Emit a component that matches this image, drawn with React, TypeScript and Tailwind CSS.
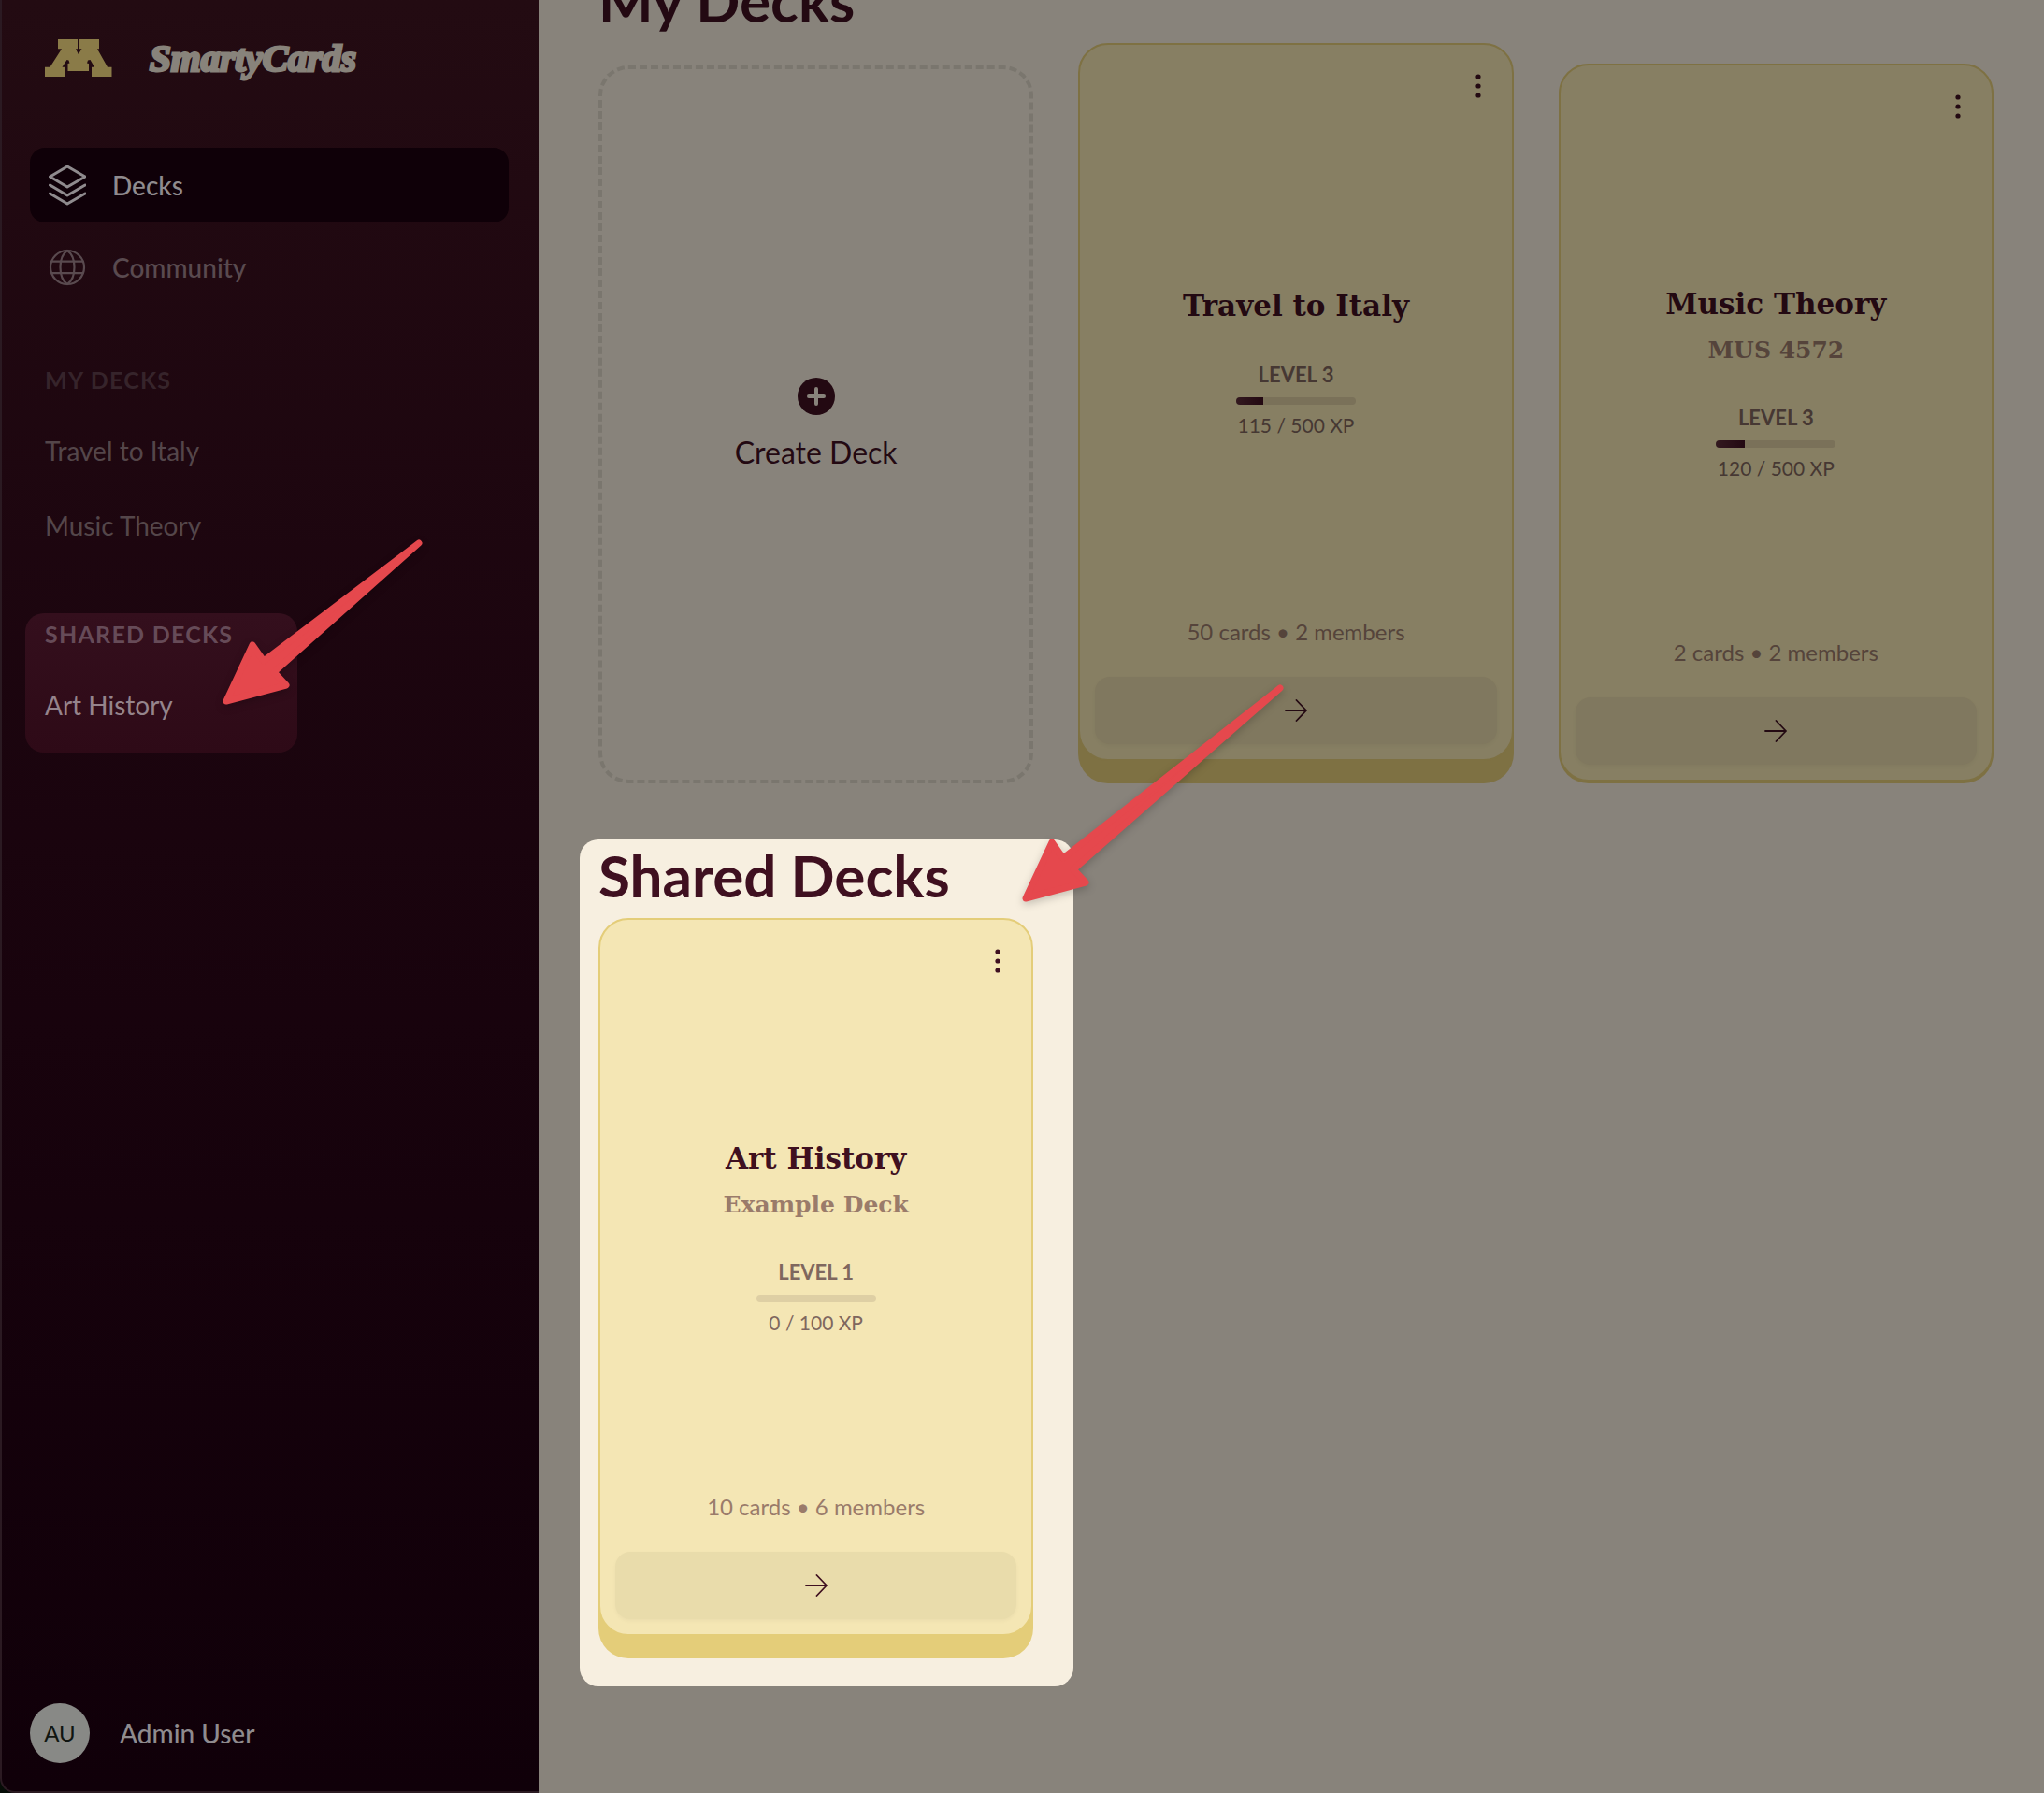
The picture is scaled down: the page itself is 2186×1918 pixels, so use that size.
import type { ReactNode } from "react";

type Tone = "dim" | "bright";

const tones = {
  dim: {
    body: "bg-[#877f63] border-[#7e7143]",
    edge: "#7e7143",
    strong: "text-[#230912]",
    level: "text-[#463833]",
    muted: "text-[#55443b]",
    track: "bg-[#7a7159]",
    action: "bg-[#80785f]",
  },
  bright: {
    body: "bg-[#f4e6b4] border-[#e4cd79]",
    edge: "#e4cd79",
    strong: "text-[#3f1020]",
    level: "text-[#7f675e]",
    muted: "text-[#9a7b6a]",
    track: "bg-[#decfa4]",
    action: "bg-[#e9dcab]",
  },
};

interface Deck {
  title: string;
  subtitle?: string;
  level: number;
  xp: number;
  goal: number;
  cards: number;
  members: number;
}

const italy: Deck = { title: "Travel to Italy", level: 3, xp: 115, goal: 500, cards: 50, members: 2 };
const music: Deck = { title: "Music Theory", subtitle: "MUS 4572", level: 3, xp: 120, goal: 500, cards: 2, members: 2 };
const art: Deck = { title: "Art History", subtitle: "Example Deck", level: 1, xp: 0, goal: 100, cards: 10, members: 6 };

function LogoMark() {
  return (
    <svg viewBox="0 0 72 40" className="h-10 w-[72px] shrink-0" fill="#8a7b48" aria-hidden="true">
      <path d="M14 0H35V10.3H33L35.8 16L39.500 10.3H37V0H58V10.3H56L67 29.7H71.500V40H50V29.7H53L48.500 22L46 22.500L45 25.500L47 26V34H24.500V26L26.500 25.500L25.500 22.500L23.500 22L18.500 29.7H21.500V40H0V29.7H5.500L18 10.3H14Z" />
    </svg>
  );
}

function LayersIcon() {
  return (
    <svg viewBox="0 0 40 44" className="h-11 w-10 shrink-0" fill="none" stroke="currentColor" strokeWidth="3" strokeLinejoin="round" strokeLinecap="round" aria-hidden="true">
      <path d="M20 2L39 13L20 24L1.500 13Z" />
      <path d="M1.500 22L20 33L39 22" />
      <path d="M1.500 31L20 42L39 31" />
    </svg>
  );
}

function GlobeIcon() {
  return (
    <svg viewBox="0 0 40 40" className="h-10 w-10 shrink-0" fill="none" stroke="currentColor" strokeWidth="2.200" aria-hidden="true">
      <circle cx="20" cy="20" r="18" />
      <path d="M20 2C15.500 5 12.500 12 12.500 20S15.500 35 20 38C24.500 35 27.500 28 27.500 20S24.500 5 20 2Z" />
      <path d="M3 13.700H37M3 26.200H37" />
    </svg>
  );
}

function PlusIcon() {
  return (
    <svg viewBox="0 0 40 40" className="h-10 w-10" aria-hidden="true">
      <circle cx="20" cy="20" r="20" fill="#230912" />
      <path d="M20 12V28M12 20H28" stroke="#88837b" strokeWidth="4" strokeLinecap="round" />
    </svg>
  );
}

function DotsIcon() {
  return (
    <svg viewBox="0 0 8 28" className="h-7 w-2" fill="currentColor" aria-hidden="true">
      <circle cx="4" cy="4" r="2.600" />
      <circle cx="4" cy="14" r="2.600" />
      <circle cx="4" cy="24" r="2.600" />
    </svg>
  );
}

function RightArrowIcon() {
  return (
    <svg viewBox="0 0 24 24" className="h-6 w-6" fill="none" stroke="currentColor" strokeWidth="1.800" strokeLinecap="round" strokeLinejoin="round" aria-hidden="true">
      <path d="M1 12H23M12.500 1L23 12L12.500 23" />
    </svg>
  );
}

/** Red callout arrow whose tip is at the origin; (dx, -dy) is the far end of its tail. */
function Pointer({ dx, dy, className }: { dx: number; dy: number; className: string }) {
  return (
    <svg
      viewBox={`-10 ${-dy - 10} ${dx + 20} ${dy + 20}`}
      width={dx + 20}
      height={dy + 20}
      className={`pointer-events-none absolute max-w-none overflow-visible drop-shadow-[0_3px_4px_rgba(0,0,0,0.2)] ${className}`}
      aria-hidden="true"
    >
      <path
        d={`M3 -3L31 -63L43 -46L${dx} ${-dy}L54 -34L67 -20Z`}
        fill="#e5484d"
        stroke="#e5484d"
        strokeWidth="7"
        strokeLinejoin="round"
      />
    </svg>
  );
}

function NavItem({ icon, label, active }: { icon: ReactNode; label: string; active?: boolean }) {
  return (
    <a
      href="#"
      className={`flex h-20 items-center gap-7 rounded-2xl px-5 text-[28px] font-medium ${active ? "bg-[#0f0008] text-[#8f8b8e]" : "text-[#594a4f]"}`}
    >
      {icon}
      {label}
    </a>
  );
}

function SideLink({ label, className }: { label: string; className: string }) {
  return (
    <li>
      <a href="#" className={`flex h-20 items-center text-[28px] ${className}`}>{label}</a>
    </li>
  );
}

function DeckCard({ deck, tone, className, depth }: { deck: Deck; tone: Tone; className: string; depth: number }) {
  const t = tones[tone];
  return (
    <article
      className={`flex h-[768px] flex-col rounded-4xl border-2 p-4 ${t.body} ${className}`}
      style={{ boxShadow: `0 ${depth}px 0 ${t.edge}` }}
    >
      <div className="flex justify-end">
        <button type="button" aria-label={`${deck.title} options`} className={`flex h-14 w-10 items-center justify-center ${t.strong}`}>
          <DotsIcon />
        </button>
      </div>
      <div className="flex flex-1 flex-col items-center justify-center pb-1">
        <h2 className={`font-['DejaVu_Serif',serif] text-[31px] leading-10 font-bold ${t.strong}`}>{deck.title}</h2>
        {deck.subtitle && (
          <p className={`mt-3 font-['DejaVu_Serif',serif] text-[25px] leading-9 font-bold ${t.muted}`}>{deck.subtitle}</p>
        )}
        <p className={`mt-10 text-[22px] leading-7 font-bold ${t.level}`}>LEVEL {deck.level}</p>
        <div className={`mt-2.5 h-2 w-32 overflow-hidden rounded-full ${t.track}`}>
          <div className="h-full bg-linear-to-r from-[#33191f] to-[#230912]" style={{ width: `${(deck.xp / deck.goal) * 100}%` }} />
        </div>
        <p className={`mt-2 text-[21px] leading-7 ${t.level}`}>{deck.xp} / {deck.goal} XP</p>
      </div>
      <p className={`text-center text-2xl ${t.muted}`}>{deck.cards} cards • {deck.members} members</p>
      <button
        type="button"
        aria-label={`Open ${deck.title}`}
        className={`mt-8 flex h-[72px] items-center justify-center rounded-2xl shadow-[0_2px_4px_rgba(0,0,0,0.04)] ${t.action} ${t.strong}`}
      >
        <RightArrowIcon />
      </button>
    </article>
  );
}

export default function App() {
  return (
    <div className="flex h-screen overflow-hidden bg-[#060c06] font-[Lato,sans-serif]">
      <aside className="relative z-10 flex w-[576px] shrink-0 flex-col rounded-bl-2xl border-b-2 border-l-2 border-[#2b1a22] bg-linear-to-b from-[#230b12] to-[#100009] pr-8 pb-[30px] pl-[30px]">
        <div className="flex h-[158px] items-start gap-10 pt-[42px] pl-4">
          <LogoMark />
          <span className="font-['Liberation_Serif',serif] text-[41px] leading-10 font-bold text-[#88837b] italic [-webkit-text-stroke:3px_#88837b]">
            SmartyCards
          </span>
        </div>

        <nav className="flex flex-col gap-2">
          <NavItem icon={<LayersIcon />} label="Decks" active />
          <NavItem icon={<GlobeIcon />} label="Community" />
        </nav>

        <section className="mt-16 pl-4">
          <h2 className="mb-5 text-[25px] leading-8 font-bold tracking-wider text-[#36242b]">MY DECKS</h2>
          <ul>
            <SideLink label="Travel to Italy" className="text-[#54464a]" />
            <SideLink label="Music Theory" className="text-[#54464a]" />
          </ul>
        </section>

        <section className="relative mt-[54px] -ml-[5px] w-[291px] rounded-[20px] bg-linear-to-b from-[#340f1d] to-[#2e0a17] pt-1.5 pb-[11px] pl-[21px]">
          <h2 className="mb-5 text-[25px] leading-8 font-bold tracking-wider text-[#664b58]">SHARED DECKS</h2>
          <ul>
            <SideLink label="Art History" className="text-[#95848c]" />
          </ul>
          <Pointer dx={209} dy={172} className="bottom-[42px] left-[202px]" />
        </section>

        <button type="button" className="mt-auto flex items-center gap-8 text-left text-[28px] font-medium text-[#8f8b8e]">
          <span className="flex h-16 w-16 items-center justify-center rounded-full bg-[#888986] text-2xl font-normal text-[#101510]">AU</span>
          Admin User
        </button>
      </aside>

      <main className="min-w-0 flex-1 overflow-hidden bg-[#88837b] pr-[54px] pl-16">
        <section className="-mt-8">
          <h1 className="text-[62px] leading-[64px] font-bold text-[#230912]">My Decks</h1>
          <div className="mt-[38px] grid grid-cols-3 gap-12">
            <button type="button" className="flex h-[768px] flex-col items-center justify-center gap-5 rounded-4xl border-4 border-dashed border-[#7a766e] text-[32px] leading-10 text-[#230912]">
              <PlusIcon />
              Create Deck
            </button>
            <DeckCard deck={italy} tone="dim" className="-mt-6 mb-6" depth={24} />
            <DeckCard deck={music} tone="dim" className="-mt-0.5 mb-0.5" depth={2} />
          </div>
        </section>

        <div className="mt-[60px] grid grid-cols-3 gap-12">
          <section className="relative -mr-[43px] -ml-5 rounded-[20px] bg-[#f7efe0] pt-1.5 pr-[43px] pb-[30px] pl-5">
            <h1 className="text-[62px] leading-[64px] font-bold text-[#3f1020]">Shared Decks</h1>
            <DeckCard deck={art} tone="bright" className="mt-3.5 mb-6" depth={24} />
            <Pointer dx={275} dy={228} className="-top-[172px] left-[464px]" />
          </section>
        </div>
      </main>
    </div>
  );
}
